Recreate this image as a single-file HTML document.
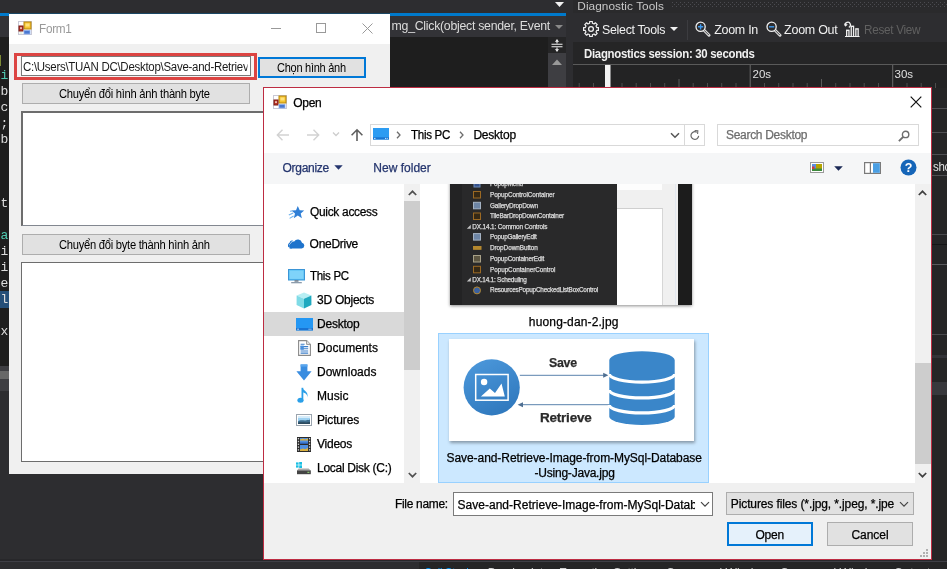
<!DOCTYPE html>
<html lang="vi"><head><meta charset="utf-8"><title>Form1 - Open</title>
<style>
html,body{margin:0;padding:0}
body{width:947px;height:569px;overflow:hidden;position:relative;background:#2d2d30;font-family:"Liberation Sans",sans-serif;font-size:12px}
div,span,svg{position:absolute;box-sizing:border-box}
.t{white-space:nowrap;transform-origin:0 50%;line-height:16px;height:16px}
.layer{left:0;top:0;width:947px;height:569px;will-change:transform}
#dlg .t{-webkit-text-stroke:0.25px currentColor}

</style></head>
<body>
<!-- ================= Visual Studio background ================= -->
<div class="layer" id="vs">
  <div style="left:0;top:13px;width:566px;height:3px;background:#007acc"></div>
  <div style="left:0;top:16px;width:566px;height:21px;background:#333337"></div>
  <div style="left:0;top:37px;width:548px;height:329px;background:#1e1e1e"></div>
  <div style="left:548px;top:37px;width:18px;height:522px;background:#3e3e42"></div>
  <div style="left:548px;top:37px;width:18px;height:16px;background:#252526"></div>
  <!-- editor bottom h-scroll bands on far left -->
  <div style="left:0;top:366px;width:9px;height:5px;background:#3e3e42"></div>
  <div style="left:0;top:371px;width:9px;height:8px;background:#686868"></div>
  <div style="left:0;top:379px;width:9px;height:12px;background:#3e3e42"></div>
  <!-- diagnostics panel -->
  <div style="left:573px;top:0;width:374px;height:560px;background:#252526"></div>
  <div style="left:573px;top:0;width:374px;height:13px;background:#2a2a2c"></div>
  <div style="left:573px;top:13px;width:374px;height:29px;background:#2d2d30"></div>
  <div style="left:573px;top:64px;width:374px;height:24px;background:#232324;border-top:1px solid #5a5a5a"></div>
    <!-- bottom strip -->
  <div style="left:0;top:559px;width:947px;height:2px;background:#27272a"></div>
  <div style="left:0;top:561px;width:947px;height:1px;background:#3f3f46"></div>
  <div style="left:0;top:562px;width:419px;height:7px;background:#2d2d30"></div>
  <div style="left:419px;top:562px;width:528px;height:7px;background:#252526"></div>

  <!-- ruler ticks + position marker -->
  <svg style="left:0;top:0" width="947" height="90" viewBox="0 0 947 90">
      <rect x="578.7" y="83" width="1" height="5" fill="#4d4d4d"/>
      <rect x="593.0" y="83" width="1" height="5" fill="#4d4d4d"/>
      <rect x="607.2" y="65" width="1" height="23" fill="#6a6a6a"/>
      <rect x="621.5" y="83" width="1" height="5" fill="#4d4d4d"/>
      <rect x="635.7" y="83" width="1" height="5" fill="#4d4d4d"/>
      <rect x="650.0" y="83" width="1" height="5" fill="#4d4d4d"/>
      <rect x="664.2" y="83" width="1" height="5" fill="#4d4d4d"/>
      <rect x="678.5" y="79" width="1" height="9" fill="#5a5a5a"/>
      <rect x="692.7" y="83" width="1" height="5" fill="#4d4d4d"/>
      <rect x="707.0" y="83" width="1" height="5" fill="#4d4d4d"/>
      <rect x="721.2" y="83" width="1" height="5" fill="#4d4d4d"/>
      <rect x="735.5" y="83" width="1" height="5" fill="#4d4d4d"/>
      <rect x="749.7" y="65" width="1" height="23" fill="#6a6a6a"/>
      <rect x="764.0" y="83" width="1" height="5" fill="#4d4d4d"/>
      <rect x="778.2" y="83" width="1" height="5" fill="#4d4d4d"/>
      <rect x="792.5" y="83" width="1" height="5" fill="#4d4d4d"/>
      <rect x="806.7" y="83" width="1" height="5" fill="#4d4d4d"/>
      <rect x="821.0" y="79" width="1" height="9" fill="#5a5a5a"/>
      <rect x="835.2" y="83" width="1" height="5" fill="#4d4d4d"/>
      <rect x="849.5" y="83" width="1" height="5" fill="#4d4d4d"/>
      <rect x="863.7" y="83" width="1" height="5" fill="#4d4d4d"/>
      <rect x="878.0" y="83" width="1" height="5" fill="#4d4d4d"/>
      <rect x="892.2" y="65" width="1" height="23" fill="#6a6a6a"/>
      <rect x="906.5" y="83" width="1" height="5" fill="#4d4d4d"/>
      <rect x="920.7" y="83" width="1" height="5" fill="#4d4d4d"/>
      <rect x="935.0" y="83" width="1" height="5" fill="#4d4d4d"/>
      <rect x="605" y="65" width="5.5" height="23" fill="#f2f2f2"/>
  </svg>
  <!-- title grip hatch -->
  <svg style="left:672px;top:2px" width="275" height="6" viewBox="0 0 275 6">
    <defs><pattern id="hp" width="4" height="4" patternUnits="userSpaceOnUse"><rect x="0" y="0" width="1" height="1" fill="#4b4b50"/><rect x="2" y="2" width="1" height="1" fill="#4b4b50"/></pattern></defs>
    <rect x="0" y="0" width="275" height="6" fill="url(#hp)"/>
  </svg>
  <!-- nav bar dropdown arrows -->
  <svg style="left:555px;top:2px" width="9" height="5" viewBox="0 0 9 5"><path d="M0 0 H9 L4.5 5 Z" fill="#f1f1f1"/></svg>
  <svg style="left:555px;top:25px" width="8" height="4" viewBox="0 0 8 4"><path d="M0 0 H8 L4 4 Z" fill="#8a8a8a"/></svg>
  <!-- splitter glyph + scroll up arrow -->
  <svg style="left:551px;top:39px" width="12" height="13" viewBox="0 0 12 13"><path d="M0.5 5.2 H11.5 M0.5 7.8 H11.5" stroke="#f1f1f1" stroke-width="1.1"/><path d="M6 0.6 V4.6 M6 8.4 V12.4" stroke="#f1f1f1" stroke-width="1.1"/><path d="M3.8 2.8 L6 0.4 L8.2 2.8 Z M3.8 10.2 L6 12.6 L8.2 10.2 Z" fill="#f1f1f1"/></svg>
  <svg style="left:552px;top:59px" width="10" height="6" viewBox="0 0 10 6"><path d="M0 6 L5 0.5 L10 6 Z" fill="#999"/></svg>
  <!-- gear -->
  <svg style="left:583px;top:21px" width="16" height="16" viewBox="0 0 16 16"><path d="M6.69 0.51 L9.31 0.51 L9.38 2.26 L11.08 2.97 L12.37 1.78 L14.22 3.63 L13.03 4.92 L13.74 6.62 L15.49 6.69 L15.49 9.31 L13.74 9.38 L13.03 11.08 L14.22 12.37 L12.37 14.22 L11.08 13.03 L9.38 13.74 L9.31 15.49 L6.69 15.49 L6.62 13.74 L4.92 13.03 L3.63 14.22 L1.78 12.37 L2.97 11.08 L2.26 9.38 L0.51 9.31 L0.51 6.69 L2.26 6.62 L2.97 4.92 L1.78 3.63 L3.63 1.78 L4.92 2.97 L6.62 2.26 Z" fill="none" stroke="#f1f1f1" stroke-width="1.2" stroke-linejoin="round"/><circle cx="8" cy="8" r="2.4" fill="none" stroke="#f1f1f1" stroke-width="1.3"/></svg>
  <svg style="left:670px;top:27px" width="8" height="4" viewBox="0 0 8 4"><path d="M0 0 H8 L4 4 Z" fill="#f1f1f1"/></svg>
  <div style="left:687px;top:20px;width:1px;height:20px;background:#3c3c40"></div>
  <!-- zoom in -->
  <svg style="left:695px;top:21px" width="16" height="16" viewBox="0 0 16 16"><path d="M8.6 8.8 L14 14.2" stroke="#d8d8d8" stroke-width="3" stroke-linecap="round"/><path d="M8.6 8.8 L13.8 14" stroke="#3a3a3c" stroke-width="0.9"/><circle cx="5.6" cy="5.8" r="4.6" fill="#2d2d30" stroke="#f1f1f1" stroke-width="1.3"/><path d="M3 5.8 H8.2 M5.6 3.2 V8.4" stroke="#3f9bf0" stroke-width="1.4"/></svg>
  <!-- zoom out -->
  <svg style="left:766px;top:21px" width="16" height="16" viewBox="0 0 16 16"><path d="M8.6 8.8 L14 14.2" stroke="#d8d8d8" stroke-width="3" stroke-linecap="round"/><path d="M8.6 8.8 L13.8 14" stroke="#3a3a3c" stroke-width="0.9"/><circle cx="5.6" cy="5.8" r="4.6" fill="#2d2d30" stroke="#f1f1f1" stroke-width="1.3"/><path d="M3 5.8 H8.2" stroke="#3f9bf0" stroke-width="1.4"/></svg>
  <!-- reset view -->
  <svg style="left:844px;top:21px" width="16" height="16" viewBox="0 0 16 16"><g fill="#efefef"><rect x="2" y="8.6" width="3.6" height="6.6"/><rect x="6.6" y="4.6" width="3.6" height="10.6"/><rect x="11.2" y="7.2" width="3.6" height="8"/></g><g fill="#2d2d30"><rect x="3.3" y="10" width="1" height="5.2"/><rect x="7.9" y="6" width="1" height="9.2"/><rect x="12.5" y="8.6" width="1" height="6.6"/></g><path d="M1 15.5 H15.6" stroke="#efefef" stroke-width="1"/><path d="M1.4 4.8 A2.6 2.6 0 1 1 4.8 6.3" fill="none" stroke="#efefef" stroke-width="1.3"/><path d="M0 2.6 L1.4 5.8 L3.8 3.6 Z" fill="#efefef"/></svg>
  <!-- right strip lines (visible beside dialog) -->
  <div style="left:932px;top:88px;width:15px;height:472px;background:#252526"></div>
  <div style="left:932px;top:108px;width:15px;height:1px;background:#4f4f52"></div>
  <div style="left:932px;top:132px;width:15px;height:1px;background:#4f4f52"></div>
  <div style="left:932px;top:154px;width:15px;height:1px;background:#4f4f52"></div>
  <div style="left:932px;top:175px;width:15px;height:1px;background:#4f4f52"></div>
  <div style="left:932px;top:234px;width:15px;height:1px;background:#4a4a4d"></div>
  <div style="left:932px;top:244px;width:15px;height:1px;background:#151516"></div>
  <div style="left:932px;top:264px;width:15px;height:1px;background:#5a5a5d"></div>
  <div style="left:932px;top:334px;width:15px;height:1px;background:#4a4a4d"></div>
  <div style="left:932px;top:355px;width:15px;height:3px;background:#333337"></div>
  <div style="left:932px;top:382px;width:15px;height:13px;background:#38383c"></div>
  <!-- highlighted code char bg -->
  <div style="left:0;top:291px;width:9px;height:17px;background:#264f78"></div>
  <div style="left:0;top:55px;width:1px;height:11px;background:#7d8a35"></div>
  <span class="t" style="left:391.6px;top:17.6px;font-size:12.3px;color:#dcdcdc;letter-spacing:-0.265px;">mg_Click(object sender, Event</span>
<span class="t" style="left:577.3px;top:-2.2px;font-size:11.8px;color:#c8c8c8;letter-spacing:0.063px;">Diagnostic Tools</span>
<span class="t" style="left:602.3px;top:21.5px;font-size:12.5px;color:#f1f1f1;letter-spacing:-0.300px;transform:scaleX(0.9926);">Select Tools</span>
<span class="t" style="left:714.2px;top:21.5px;font-size:12.5px;color:#f1f1f1;letter-spacing:-0.294px;">Zoom In</span>
<span class="t" style="left:784.1px;top:21.5px;font-size:12.5px;color:#f1f1f1;letter-spacing:-0.272px;">Zoom Out</span>
<span class="t" style="left:863.9px;top:21.5px;font-size:12.5px;color:#606060;letter-spacing:-0.300px;transform:scaleX(0.9383);">Reset View</span>
<span class="t" style="left:583.7px;top:45.6px;font-size:12px;color:#f1f1f1;font-weight:bold;letter-spacing:-0.300px;transform:scaleX(0.9507);">Diagnostics session: 30 seconds</span>
<span class="t" style="left:752.5px;top:65.8px;font-size:11.5px;color:#e0e0e0;letter-spacing:-0.016px;">20s</span>
<span class="t" style="left:894.5px;top:65.8px;font-size:11.5px;color:#e0e0e0;letter-spacing:-0.016px;">30s</span>
<span class="t" style="left:932.8px;top:158.5px;font-size:12px;color:#e0e0e0;letter-spacing:-0.300px;transform:scaleX(0.9589);">sho</span>
<span class="t" style="left:424.3px;top:564.5px;font-size:12px;color:#0097fb;letter-spacing:-0.300px;transform:scaleX(0.9328);">Call Stack</span>
<span class="t" style="left:487.7px;top:564.5px;font-size:12px;color:#d0d0d0;letter-spacing:-0.189px;">Breakpoints</span>
<span class="t" style="left:559px;top:564.5px;font-size:12px;color:#d0d0d0;letter-spacing:-0.189px;">Exception Settings</span>
<span class="t" style="left:666px;top:564.5px;font-size:12px;color:#d0d0d0;letter-spacing:0.116px;">Command Window</span>
<span class="t" style="left:780px;top:564.5px;font-size:12px;color:#d0d0d0;letter-spacing:0.116px;">Command Window</span>
<span class="t" style="left:894px;top:564.5px;font-size:12px;color:#d0d0d0;letter-spacing:0.078px;">Output</span>
<span class="t" style="left:0.5000000000000009px;top:67.5px;font-size:13px;color:#4ec9b0;font-family:'Liberation Mono', monospace;">i</span>
<span class="t" style="left:0.5000000000000009px;top:83.5px;font-size:13px;color:#dcdcdc;font-family:'Liberation Mono', monospace;">b</span>
<span class="t" style="left:-7.299999999999999px;top:99.5px;font-size:13px;color:#dcdcdc;font-family:'Liberation Mono', monospace;">.c</span>
<span class="t" style="left:0.5000000000000009px;top:115.5px;font-size:13px;color:#dcdcdc;font-family:'Liberation Mono', monospace;">;</span>
<span class="t" style="left:0.5000000000000009px;top:131.5px;font-size:13px;color:#dcdcdc;font-family:'Liberation Mono', monospace;">b</span>
<span class="t" style="left:0.5000000000000009px;top:195.5px;font-size:13px;color:#dcdcdc;font-family:'Liberation Mono', monospace;">t</span>
<span class="t" style="left:0.5000000000000009px;top:227.5px;font-size:13px;color:#4ec9b0;font-family:'Liberation Mono', monospace;">a</span>
<span class="t" style="left:0.5000000000000009px;top:243.5px;font-size:13px;color:#dcdcdc;font-family:'Liberation Mono', monospace;">i</span>
<span class="t" style="left:0.5000000000000009px;top:259.5px;font-size:13px;color:#dcdcdc;font-family:'Liberation Mono', monospace;">i</span>
<span class="t" style="left:-7.299999999999999px;top:275.5px;font-size:13px;color:#dcdcdc;font-family:'Liberation Mono', monospace;">.e</span>
<span class="t" style="left:0.5000000000000009px;top:291.5px;font-size:13px;color:#dcdcdc;font-family:'Liberation Mono', monospace;">l</span>
<span class="t" style="left:0.5000000000000009px;top:323.5px;font-size:13px;color:#dcdcdc;font-family:'Liberation Mono', monospace;">x</span>
</div>

<!-- ================= Form1 window ================= -->
<div class="layer" id="form1">
  <div style="left:9px;top:13px;width:381px;height:1px;background:#1b4764"></div>
  <div style="left:9px;top:14px;width:381px;height:460px;background:#f0f0f0"></div>
  <div style="left:9px;top:14px;width:381px;height:30px;background:#fff"></div>
  <!-- form icon -->
  <svg style="left:18px;top:21px" width="14" height="14" viewBox="0 0 14 14">
    <rect x="0.5" y="0.5" width="13" height="13" fill="#fff" stroke="#c9c9d6"/>
    <rect x="1" y="1" width="5" height="4" fill="#fdfdff"/>
    <rect x="6" y="1" width="7" height="7" fill="#f4c430" stroke="#b8860b" stroke-width="1"/>
    <rect x="7.5" y="2.5" width="4" height="3" fill="#ffe27a"/>
    <rect x="1" y="5" width="4" height="5" fill="#c0392b" stroke="#7b1a12" stroke-width="1"/>
    <rect x="2.3" y="6.3" width="1.4" height="1.6" fill="#fff"/>
    <rect x="6" y="9.5" width="6" height="3.5" fill="#4a78d0" stroke="#8fb0ea" stroke-width="0.8"/>
    <rect x="1.5" y="11" width="3" height="2" fill="#e8f0e0"/>
  </svg>
  <!-- caption buttons (inactive grey) -->
  <div style="left:271px;top:28px;width:10px;height:1px;background:#999"></div>
  <div style="left:316px;top:23px;width:10px;height:10px;border:1px solid #999"></div>
  <svg style="left:362px;top:23px" width="11" height="11" viewBox="0 0 11 11"><path d="M0.5 0.5 L10.5 10.5 M10.5 0.5 L0.5 10.5" stroke="#999" stroke-width="1" fill="none"/></svg>
  <!-- red highlight + textbox -->
  <div style="left:14px;top:53px;width:243px;height:27px;border:3px solid #dc4442;background:#f6f2f2"></div>
  <div style="left:21px;top:56px;width:230px;height:20px;background:#fff;border:1px solid #7a7a7a;overflow:hidden" id="tb1"></div>
  <!-- Chon hinh anh (focused) -->
  <div style="left:258px;top:57px;width:108px;height:21px;background:#e1e1e1;border:2px solid #0078d7"></div>
  <!-- button 1 -->
  <div style="left:22px;top:83px;width:228px;height:21px;background:#e1e1e1;border:1px solid #adadad"></div>
  <!-- listbox 1 -->
  <div style="left:21px;top:111px;width:250px;height:115px;background:#fff;border:1px solid #828790;border-top:2px solid #6d6d6d;border-left:2px solid #6d6d6d"></div>
  <!-- button 2 -->
  <div style="left:22px;top:234px;width:228px;height:21px;background:#e1e1e1;border:1px solid #adadad"></div>
  <!-- listbox 2 -->
  <div style="left:21px;top:262px;width:250px;height:200px;background:#fff;border:1px solid #6d6d6d"></div>
  <span class="t" style="left:38.7px;top:20.5px;font-size:12px;color:#999;letter-spacing:-0.300px;transform:scaleX(0.9797);">Form1</span>
<span class="t" style="left:23.2px;top:58.5px;font-size:12.5px;color:#1a1a1a;letter-spacing:-0.300px;transform:scaleX(0.9184);clip-path:inset(0 1px 0 0);">C:\Users\TUAN DC\Desktop\Save-and-Retriev</span>
<span class="t" style="left:276.5px;top:59.5px;font-size:12.5px;color:#000;letter-spacing:-0.300px;transform:scaleX(0.8807);">Chọn hình ảnh</span>
<span class="t" style="left:59.3px;top:85.5px;font-size:12.5px;color:#000;letter-spacing:-0.300px;transform:scaleX(0.8958);">Chuyển đổi hình ảnh thành byte</span>
<span class="t" style="left:59.3px;top:236.5px;font-size:12.5px;color:#000;letter-spacing:-0.300px;transform:scaleX(0.8958);">Chuyển đổi byte thành hình ảnh</span>
</div>

<!-- ================= Open file dialog ================= -->
<div class="layer" id="dlg">
  <div style="left:263px;top:87px;width:669px;height:473px;background:#fff;border:1px solid #bd2c42"></div>
  <!-- toolbar band -->
  <div style="left:264px;top:153px;width:667px;height:31px;background:#f5f6f7"></div>
  <!-- bottom band -->
  <div style="left:264px;top:483px;width:667px;height:76px;background:#f0f0f0"></div>
  <!-- address box -->
  <div style="left:370px;top:124px;width:335px;height:22px;background:#fff;border:1px solid #d9d9d9"></div>
  <div style="left:684px;top:125px;width:1px;height:20px;background:#d9d9d9"></div>
  <!-- search box -->
  <div style="left:717px;top:124px;width:202px;height:22px;background:#fff;border:1px solid #d9d9d9"></div>
  <!-- nav pane selection -->
  <div style="left:264px;top:312px;width:140px;height:24px;background:#d9d9d9"></div>
  <!-- nav scrollbar -->
  <div style="left:404px;top:184px;width:16px;height:299px;background:#f0f0f0"></div>
  <div style="left:404px;top:201px;width:16px;height:169px;background:#cdcdcd"></div>
  <!-- file list scrollbar -->
  <div style="left:915px;top:184px;width:16px;height:299px;background:#f0f0f0"></div>
  <div style="left:915px;top:363px;width:16px;height:101px;background:#cdcdcd"></div>
  <!-- file list (clipped) -->
  <div class="layer" id="flist" style="clip-path:inset(184px 32px 86px 421px)">
    <!-- thumb 1: huong-dan-2.jpg -->
    <div style="left:450px;top:150px;width:242px;height:155px;background:#29292a;box-shadow:0 1px 3px rgba(0,0,0,.45)"></div>
    <div style="left:450px;top:150px;width:12px;height:155px;background:#232324"></div>
    <div style="left:617px;top:150px;width:61px;height:155px;background:#f0f0f0"></div>
    <div style="left:617px;top:150px;width:45px;height:40px;background:#fdfdfd"></div>
    <div style="left:617px;top:208px;width:46px;height:97px;background:#fff;border-top:1px solid #cfcfcf;border-right:1px solid #d6d6d6"></div>
    <div style="left:675px;top:150px;width:1px;height:155px;background:#e3e8f0"></div>
    <div style="left:678px;top:150px;width:14px;height:155px;background:#1c1c1c"></div>
    <!-- selected tile -->
    <div style="left:438px;top:333px;width:271px;height:150px;background:#cce8ff;border:1px solid #99d1ff"></div>
    <div style="left:449px;top:339px;width:245px;height:102px;background:#fff;box-shadow:1px 2px 3px rgba(0,0,0,.35)"></div>

    <!-- thumb 2 artwork -->
    <svg style="left:449px;top:339px" width="245" height="102" viewBox="449 339 245 102">
      <defs><linearGradient id="cg" x1="0.2" y1="0" x2="0.7" y2="1"><stop offset="0" stop-color="#4b97da"/><stop offset="1" stop-color="#2f78bd"/></linearGradient></defs>
      <circle cx="491.7" cy="387.4" r="28.1" fill="url(#cg)"/>
      <rect x="475.7" y="374.5" width="32.4" height="25.7" fill="none" stroke="#fff" stroke-width="1.5"/>
      <circle cx="484.1" cy="382" r="3.2" fill="#fff"/>
      <path d="M480.9 396.6 L489.8 388.6 L495 393.1 L501.5 383.5 L504.8 396.6 Z" fill="#fff"/>
      <path d="M519.8 375.3 H606" stroke="#5b83ad" stroke-width="1" fill="none"/>
      <path d="M603.2 372.8 L608.4 375.3 L603.2 377.8 Z" fill="#4f6f92"/>
      <path d="M521.5 404.7 H609.5" stroke="#5b83ad" stroke-width="1" fill="none"/>
      <path d="M523 402.2 L517.6 404.7 L523 407.2 Z" fill="#4f6f92"/>
      <path d="M609.3 360 A32.7 8.7 0 0 1 674.7 360 V416.7 A32.7 8.2 0 0 1 609.3 416.7 Z" fill="#3a86c9"/>
      <path d="M609.3 374.1 A32.7 8 0 0 0 674.7 374.1" stroke="#fff" stroke-width="3.3" fill="none"/>
      <path d="M609.3 389.9 A32.7 8 0 0 0 674.7 389.9" stroke="#fff" stroke-width="3.3" fill="none"/>
      <path d="M609.3 404.9 A32.7 8 0 0 0 674.7 404.9" stroke="#fff" stroke-width="3.3" fill="none"/>
    </svg>
    <!-- thumb 1 tiny icons -->
    <svg style="left:464px;top:184px;opacity:.8" width="20" height="115" viewBox="464 184 20 115">
      <g fill="none" stroke-width="1">
        <rect x="474" y="181" width="6" height="6" stroke="#7fa6e0" fill="#3b5ea8"/>
        <rect x="473.5" y="191.5" width="7" height="6.5" stroke="#b87a22" fill="#3a2a10"/>
        <rect x="473.5" y="202.3" width="7" height="6.5" stroke="#c4d6ea" fill="#7f9cc4"/>
        <rect x="473.5" y="213" width="7" height="6.5" stroke="#b87a22" fill="#3a2a10"/>
        <rect x="473.5" y="233.6" width="7" height="6.5" stroke="#c4d6ea" fill="#7f9cc4"/>
        <rect x="473.5" y="246.5" width="7.5" height="2.8" stroke="#d8a030" fill="#d8a030"/>
        <rect x="473.5" y="255.5" width="7" height="6.5" stroke="#c8c0a0" fill="#6a6248"/>
        <rect x="473.5" y="266.3" width="7" height="6.5" stroke="#b87a22" fill="#3a2a10"/>
        <circle cx="477" cy="290.4" r="3.5" stroke="#d8a030" fill="#3f6fc0"/>
      </g>
      <path d="M470.8 224.8 V228.8 H466.8 Z M470.8 277.6 V281.6 H466.8 Z" fill="#e8e8e8"/>
    </svg>
    <span class="t" style="left:528.8px;top:314.0px;font-size:12px;color:#000;letter-spacing:0.160px;">huong-dan-2.jpg</span>
<span class="t" style="left:446.5px;top:450.0px;font-size:12px;color:#000;letter-spacing:-0.065px;">Save-and-Retrieve-Image-from-MySql-Database</span>
<span class="t" style="left:534.5px;top:465.0px;font-size:12px;color:#000;letter-spacing:-0.218px;">-Using-Java.jpg</span>
<span class="t" style="left:548.8px;top:354.5px;font-size:13.5px;color:#2b2b2b;font-weight:bold;letter-spacing:-0.300px;transform:scaleX(0.9165);">Save</span>
<span class="t" style="left:540px;top:409.5px;font-size:13.5px;color:#2b2b2b;font-weight:bold;letter-spacing:-0.225px;">Retrieve</span>
<span class="t" style="left:490px;top:176.3px;font-size:6.4px;color:#dadada;letter-spacing:-0.163px;">PopupMenu</span>
<span class="t" style="left:490px;top:186.7px;font-size:6.4px;color:#dadada;letter-spacing:-0.105px;">PopupControlContainer</span>
<span class="t" style="left:490px;top:197.5px;font-size:6.4px;color:#dadada;letter-spacing:-0.176px;">GalleryDropDown</span>
<span class="t" style="left:490px;top:208.2px;font-size:6.4px;color:#dadada;letter-spacing:-0.159px;">TileBarDropDownContainer</span>
<span class="t" style="left:472.3px;top:219.0px;font-size:6.4px;color:#dadada;letter-spacing:-0.131px;">DX.14.1: Common Controls</span>
<span class="t" style="left:490px;top:228.8px;font-size:6.4px;color:#dadada;letter-spacing:-0.196px;">PopupGalleryEdit</span>
<span class="t" style="left:490px;top:239.9px;font-size:6.4px;color:#dadada;letter-spacing:-0.062px;">DropDownButton</span>
<span class="t" style="left:490px;top:250.7px;font-size:6.4px;color:#dadada;letter-spacing:-0.167px;">PopupContainerEdit</span>
<span class="t" style="left:490px;top:261.5px;font-size:6.4px;color:#dadada;letter-spacing:-0.071px;">PopupContainerControl</span>
<span class="t" style="left:472.3px;top:271.9px;font-size:6.4px;color:#dadada;letter-spacing:-0.203px;">DX.14.1: Scheduling</span>
<span class="t" style="left:490px;top:282.4px;font-size:6.4px;color:#dadada;letter-spacing:-0.223px;">ResourcesPopupCheckedListBoxControl</span>
  </div>
  <!-- file name combo -->
  <div style="left:453px;top:492px;width:260px;height:24px;background:#fff;border:1px solid #7a7a7a"></div>
  <!-- filter combo -->
  <div style="left:726px;top:492px;width:188px;height:23px;background:#e1e1e1;border:1px solid #adadad"></div>
  <!-- buttons -->
  <div style="left:727px;top:522px;width:86px;height:24px;background:#e5f1fb;border:2px solid #0078d7"></div>
  <div style="left:827px;top:522px;width:86px;height:24px;background:#e1e1e1;border:1px solid #adadad"></div>

  <!-- dialog title icon -->
  <svg style="left:273px;top:95px" width="14" height="14" viewBox="0 0 14 14">
    <rect x="0.5" y="0.5" width="13" height="13" fill="#fff" stroke="#c9c9d6"/>
    <rect x="6" y="1" width="7" height="7" fill="#f4c430" stroke="#b8860b" stroke-width="1"/>
    <rect x="7.5" y="2.5" width="4" height="3" fill="#ffe27a"/>
    <rect x="1" y="5" width="4" height="5" fill="#c0392b" stroke="#7b1a12" stroke-width="1"/>
    <rect x="2.3" y="6.3" width="1.4" height="1.6" fill="#fff"/>
    <rect x="6" y="9.5" width="6" height="3.5" fill="#4a78d0" stroke="#8fb0ea" stroke-width="0.8"/>
  </svg>
  <!-- dialog close X -->
  <svg style="left:910px;top:96px" width="12" height="12" viewBox="0 0 12 12"><path d="M0.7 0.7 L11.3 11.3 M11.3 0.7 L0.7 11.3" stroke="#111" stroke-width="1.2" fill="none"/></svg>
  <!-- nav arrows -->
  <svg style="left:276px;top:128px" width="14" height="14" viewBox="0 0 14 14"><path d="M13 7 H1.5 M6.5 1.8 L1.3 7 L6.5 12.2" stroke="#d2d2d2" stroke-width="1.4" fill="none"/></svg>
  <svg style="left:306px;top:128px" width="14" height="14" viewBox="0 0 14 14"><path d="M1 7 H12.5 M7.5 1.8 L12.7 7 L7.5 12.2" stroke="#d2d2d2" stroke-width="1.4" fill="none"/></svg>
  <svg style="left:332px;top:131px" width="8" height="6" viewBox="0 0 8 6"><path d="M1 1.5 L4 4.5 L7 1.5" stroke="#cdcdcd" stroke-width="1.3" fill="none"/></svg>
  <svg style="left:350px;top:128px" width="14" height="14" viewBox="0 0 14 14"><path d="M7 13 V2 M1.6 7.2 L7 1.8 L12.4 7.2" stroke="#5e5e5e" stroke-width="1.6" fill="none"/></svg>
  <!-- address PC icon -->
  <svg style="left:373px;top:128px" width="16" height="12" viewBox="0 0 16 12">
    <rect x="0" y="0" width="16" height="11.5" fill="#2c9cf2"/>
    <rect x="0" y="9.3" width="16" height="2.2" fill="#1976d2"/>
    <rect x="1.2" y="9.9" width="1.2" height="1" fill="#fff"/><rect x="12" y="9.9" width="1" height="1" fill="#d6ecff"/><rect x="13.7" y="9.9" width="1" height="1" fill="#d6ecff"/>
  </svg>
  <svg style="left:396px;top:131px" width="5" height="8" viewBox="0 0 5 8"><path d="M1 0.8 L4 4 L1 7.2" stroke="#6d6d6d" stroke-width="1.3" fill="none"/></svg>
  <svg style="left:459px;top:131px" width="5" height="8" viewBox="0 0 5 8"><path d="M1 0.8 L4 4 L1 7.2" stroke="#6d6d6d" stroke-width="1.3" fill="none"/></svg>
  <svg style="left:670px;top:132px" width="10" height="7" viewBox="0 0 10 7"><path d="M1 1.2 L5 5.2 L9 1.2" stroke="#555" stroke-width="1.5" fill="none"/></svg>
  <!-- refresh -->
  <svg style="left:690px;top:130px" width="10" height="11" viewBox="0 0 12 13"><path d="M8.2 2.6 A4.6 4.6 0 1 0 10.4 7" stroke="#666" stroke-width="1.4" fill="none"/><path d="M5.6 0.6 L9.4 0.9 L9.1 4.7" stroke="#666" stroke-width="1.3" fill="none"/></svg>
  <!-- search magnifier -->
  <svg style="left:898px;top:130px" width="12" height="12" viewBox="0 0 12 12"><circle cx="7.6" cy="4.4" r="3.2" stroke="#6d6d6d" stroke-width="1.4" fill="none"/><path d="M5.2 6.8 L0.9 11.1" stroke="#6d6d6d" stroke-width="1.9" fill="none"/></svg>

  <!-- toolbar: organize arrow, view icon, dropdown, preview pane, help -->
  <svg style="left:334px;top:165px" width="9" height="5" viewBox="0 0 9 5"><path d="M0.3 0.3 H8.7 L4.5 4.7 Z" fill="#24356e"/></svg>
  <svg style="left:810px;top:162px" width="14" height="11" viewBox="0 0 14 11">
    <rect x="0.5" y="0.5" width="13" height="10" fill="#fff" stroke="#9a9a9a"/>
    <rect x="2" y="2" width="10" height="7" fill="#5b8fe0"/>
    <rect x="6" y="2" width="6" height="5" fill="#b5a400"/>
    <rect x="2" y="6.5" width="10" height="2.5" fill="#3c8a3c"/>
    <rect x="2" y="4.5" width="2.5" height="2.5" fill="#d23a3a"/>
  </svg>
  <svg style="left:834px;top:166px" width="9" height="5" viewBox="0 0 9 5"><path d="M0.2 0.2 H8.8 L4.5 4.8 Z" fill="#1a2855"/></svg>
  <svg style="left:864px;top:162px" width="17" height="12" viewBox="0 0 17 12">
    <rect x="0.6" y="0.6" width="15.8" height="10.8" fill="#fff" stroke="#7a7a7a" stroke-width="1.2"/>
    <rect x="9" y="1.2" width="6.8" height="9.6" fill="#4a9fe3"/>
    <rect x="5.8" y="1" width="1.2" height="10" fill="#7a7a7a"/>
  </svg>
  <svg style="left:900px;top:159px" width="17" height="17" viewBox="0 0 17 17"><circle cx="8.5" cy="8.5" r="8" fill="#1565b8"/><text x="8.5" y="13" text-anchor="middle" font-family="Liberation Sans, sans-serif" font-weight="bold" font-size="12.5" fill="#fff">?</text></svg>
  <!-- scrollbar arrows -->
  <svg style="left:408px;top:190px" width="9" height="6" viewBox="0 0 9 6"><path d="M0.8 5 L4.5 1.3 L8.2 5" stroke="#505050" stroke-width="1.7" fill="none"/></svg>
  <svg style="left:408px;top:472px" width="9" height="6" viewBox="0 0 9 6"><path d="M0.8 1 L4.5 4.7 L8.2 1" stroke="#505050" stroke-width="1.7" fill="none"/></svg>
  <svg style="left:918px;top:190px" width="9" height="6" viewBox="0 0 9 6"><path d="M0.8 5 L4.5 1.3 L8.2 5" stroke="#404040" stroke-width="1.7" fill="none"/></svg>
  <svg style="left:918px;top:472px" width="9" height="6" viewBox="0 0 9 6"><path d="M0.8 1 L4.5 4.7 L8.2 1" stroke="#404040" stroke-width="1.7" fill="none"/></svg>
  <!-- nav pane icons -->
  <!-- quick access star -->
  <svg style="left:288px;top:205px" width="17" height="15" viewBox="0 0 17 15">
    <path d="M9.8 0.9 L11.7 5.2 L16.2 5.5 L12.7 8.5 L13.9 13.2 L9.8 10.6 L5.8 13.2 L7 8.5 L3.4 5.5 L8 5.2 Z" fill="#2f7fd6"/>
    <path d="M0.8 10 L5.2 8 M1.6 13.4 L5.6 11 M2 6.2 L4 6" stroke="#6fb3ee" stroke-width="1.1" fill="none"/>
  </svg>
  <!-- onedrive cloud -->
  <svg style="left:288px;top:238px" width="17" height="11" viewBox="0 0 17 11">
    <path d="M4.2 10.6 H13.6 A3 3 0 0 0 14 4.7 A4.3 4.3 0 0 0 6.2 3.4 A3 3 0 0 0 2.4 5.6 A2.6 2.6 0 0 0 4.2 10.6 Z" fill="#1e73cc"/>
    <path d="M1.2 9.6 A2.6 2.6 0 0 1 2.4 5.6 A3 3 0 0 1 5.4 3.3" stroke="#fff" stroke-width="0.9" fill="none" opacity=".85"/>
    <path d="M0.9 8.9 A2.5 2.5 0 0 1 1.9 5.2 A3.1 3.1 0 0 1 4.6 2.8" stroke="#1e73cc" stroke-width="1.1" fill="none"/>
  </svg>
  <!-- this pc monitor -->
  <svg style="left:288px;top:269px" width="17" height="15" viewBox="0 0 17 15">
    <rect x="0.5" y="0.5" width="16" height="10.5" fill="#59c2f3" stroke="#3b95d6"/>
    <rect x="1.6" y="1.6" width="13.8" height="8.3" fill="#7fd3fa"/>
    <rect x="6.5" y="11" width="4" height="1.8" fill="#7a8a99"/>
    <rect x="3.2" y="13" width="10.6" height="1.3" fill="#8c9bab"/>
  </svg>
  <!-- 3D objects cube -->
  <svg style="left:296px;top:292px" width="16" height="17" viewBox="0 0 16 17">
    <path d="M8 0.6 L15.4 3.6 L8 6.8 L0.6 3.6 Z" fill="#b7eef3"/>
    <path d="M0.6 3.6 L8 6.8 V16.4 L0.6 13 Z" fill="#7fdbe6"/>
    <path d="M15.4 3.6 L8 6.8 V16.4 L15.4 13 Z" fill="#1fa9bf"/>
  </svg>
  <!-- desktop -->
  <svg style="left:296px;top:318px" width="17" height="13" viewBox="0 0 17 13">
    <rect x="0" y="0" width="17" height="12.4" fill="#2497f3"/>
    <rect x="0" y="10" width="17" height="2.4" fill="#1873d3"/>
    <rect x="1.4" y="10.7" width="1.3" height="1" fill="#fff"/><rect x="12.6" y="10.7" width="1" height="1" fill="#d6ecff"/><rect x="14.4" y="10.7" width="1" height="1" fill="#d6ecff"/>
  </svg>
  <!-- documents -->
  <svg style="left:298px;top:340px" width="13" height="16" viewBox="0 0 13 16">
    <path d="M0.6 0.6 H8.6 L12.4 4.4 V15.4 H0.6 Z" fill="#fff" stroke="#8a8a8a" stroke-width="1.1"/>
    <path d="M8.6 0.6 V4.4 H12.4" fill="#e8e8e8" stroke="#8a8a8a" stroke-width="0.9"/>
    <path d="M2.6 4.2 H6.6 M2.6 6.6 H10.2 M2.6 8.8 H10.2 M2.6 11 H10.2 M2.6 13.1 H10.2" stroke="#3d7fc9" stroke-width="1.1"/>
    <rect x="2.4" y="5.6" width="3.4" height="4.2" fill="#4a8fdb"/>
  </svg>
  <!-- downloads -->
  <svg style="left:296px;top:364px" width="16" height="17" viewBox="0 0 16 17">
    <path d="M4.6 0.4 H11.4 V7.2 H15.6 L8 16.4 L0.4 7.2 H4.6 Z" fill="#3a8de0"/>
    <path d="M4.6 0.4 H11.4 V2.6 H4.6 Z" fill="#5aa6ee"/>
  </svg>
  <!-- music -->
  <svg style="left:297px;top:387px" width="13" height="17" viewBox="0 0 13 17">
    <path d="M5.4 0.8 V12.4" stroke="#2a9fe8" stroke-width="1.8" fill="none"/>
    <path d="M5.4 0.8 C6.4 3.8 11.8 4.6 10.4 10.4 C10.6 7.2 7.6 6 6.2 5.6 Z" fill="#2a9fe8"/>
    <ellipse cx="3.5" cy="13.2" rx="3.1" ry="2.5" fill="#2a9fe8"/>
  </svg>
  <!-- pictures -->
  <svg style="left:296px;top:414px" width="16" height="12" viewBox="0 0 16 12">
    <rect x="0.5" y="0.5" width="15" height="11" fill="#fff" stroke="#9aa4ae"/>
    <rect x="2" y="2" width="12" height="8" fill="#9fd2f2"/>
    <path d="M2 7.4 C5 4.8 8 7.6 14 5.6 V10 H2 Z" fill="#3e6e8e"/>
    <path d="M2 8.8 C6 7.4 9 9.2 14 8 V10 H2 Z" fill="#2c4a5e"/>
    <rect x="2" y="2" width="12" height="2" fill="#d6ecfa"/>
  </svg>
  <!-- videos -->
  <svg style="left:297px;top:437px" width="14" height="15" viewBox="0 0 14 15">
    <rect x="0" y="0" width="14" height="15" fill="#2b2b2b"/>
    <rect x="3" y="1" width="8" height="6" fill="#4f8fe0"/>
    <rect x="3" y="8" width="8" height="6" fill="#4f8fe0"/>
    <path d="M3 2.6 L6 1.6 L8 2.6 L11 1.4 V3.4 H3 Z" fill="#d9b040"/>
    <path d="M3 12.4 L6 11.4 L8 12.2 L11 11 V14 H3 Z" fill="#d9b040"/>
    <path d="M3 5.6 H11 V7 H3 Z" fill="#2d5fb0"/>
    <g fill="#cfcfcf"><rect x="0.8" y="1" width="1.3" height="1.4"/><rect x="0.8" y="3.8" width="1.3" height="1.4"/><rect x="0.8" y="6.6" width="1.3" height="1.4"/><rect x="0.8" y="9.4" width="1.3" height="1.4"/><rect x="0.8" y="12.2" width="1.3" height="1.4"/>
    <rect x="11.9" y="1" width="1.3" height="1.4"/><rect x="11.9" y="3.8" width="1.3" height="1.4"/><rect x="11.9" y="6.6" width="1.3" height="1.4"/><rect x="11.9" y="9.4" width="1.3" height="1.4"/><rect x="11.9" y="12.2" width="1.3" height="1.4"/></g>
  </svg>
  <!-- local disk -->
  <svg style="left:296px;top:462px" width="16" height="13" viewBox="0 0 16 13">
    <g fill="#19bfe3"><rect x="0" y="0.4" width="2.6" height="2.3"/><rect x="3.2" y="0" width="2.8" height="2.7"/><rect x="0" y="3.3" width="2.6" height="2.3"/><rect x="3.2" y="3.3" width="2.8" height="2.7"/></g>
    <path d="M2.6 6.4 H12.6 L14.8 8.4 H1 Z" fill="#a9a9a9"/>
    <rect x="1" y="8.4" width="13.8" height="3.8" fill="#444"/>
    <rect x="11.4" y="9.8" width="2" height="1" fill="#9be37a"/>
  </svg>
  <!-- combo chevrons -->
  <svg style="left:700px;top:501px" width="10" height="7" viewBox="0 0 10 7"><path d="M1 1.2 L5 5.2 L9 1.2" stroke="#444" stroke-width="1.2" fill="none"/></svg>
  <svg style="left:899px;top:501px" width="10" height="7" viewBox="0 0 10 7"><path d="M1 1.2 L5 5.2 L9 1.2" stroke="#444" stroke-width="1.2" fill="none"/></svg>
  <!-- size grip -->
  <svg style="left:919px;top:548px" width="10" height="10" viewBox="0 0 10 10"><g fill="#b0b0b0"><rect x="7" y="1" width="2" height="2"/><rect x="4" y="4" width="2" height="2"/><rect x="7" y="4" width="2" height="2"/><rect x="1" y="7" width="2" height="2"/><rect x="4" y="7" width="2" height="2"/><rect x="7" y="7" width="2" height="2"/></g></svg>

  <span class="t" style="left:293.3px;top:94.5px;font-size:12px;color:#000;letter-spacing:-0.290px;">Open</span>
<span class="t" style="left:410.7px;top:127.0px;font-size:12px;color:#000;letter-spacing:-0.300px;transform:scaleX(0.9634);">This PC</span>
<span class="t" style="left:473.4px;top:127.0px;font-size:12px;color:#000;letter-spacing:-0.219px;">Desktop</span>
<span class="t" style="left:726px;top:127.0px;font-size:12px;color:#6d6d6d;letter-spacing:-0.300px;">Search Desktop</span>
<span class="t" style="left:282.5px;top:159.5px;font-size:12px;color:#24356e;letter-spacing:-0.275px;">Organize</span>
<span class="t" style="left:373.3px;top:159.5px;font-size:12px;color:#24356e;letter-spacing:0.014px;">New folder</span>
<span class="t" style="left:309.6px;top:204.0px;font-size:12px;color:#000;letter-spacing:-0.300px;transform:scaleX(0.9947);">Quick access</span>
<span class="t" style="left:309.6px;top:236.0px;font-size:12px;color:#000;letter-spacing:-0.286px;">OneDrive</span>
<span class="t" style="left:309.6px;top:267.5px;font-size:12px;color:#000;letter-spacing:-0.300px;transform:scaleX(0.9584);">This PC</span>
<span class="t" style="left:317px;top:291.5px;font-size:12px;color:#000;letter-spacing:-0.236px;">3D Objects</span>
<span class="t" style="left:317px;top:315.5px;font-size:12px;color:#000;letter-spacing:-0.219px;">Desktop</span>
<span class="t" style="left:317px;top:339.5px;font-size:12px;color:#000;letter-spacing:0.033px;">Documents</span>
<span class="t" style="left:317px;top:363.5px;font-size:12px;color:#000;letter-spacing:0.014px;">Downloads</span>
<span class="t" style="left:317px;top:387.5px;font-size:12px;color:#000;letter-spacing:0.031px;">Music</span>
<span class="t" style="left:317px;top:411.5px;font-size:12px;color:#000;letter-spacing:-0.170px;">Pictures</span>
<span class="t" style="left:317px;top:435.5px;font-size:12px;color:#000;letter-spacing:-0.247px;">Videos</span>
<span class="t" style="left:317px;top:459.5px;font-size:12px;color:#000;letter-spacing:-0.279px;">Local Disk (C:)</span>
<span class="t" style="left:394.6px;top:496.0px;font-size:12px;color:#000;letter-spacing:-0.300px;transform:scaleX(0.9956);">File name:</span>
<span class="t" style="left:457.5px;top:496.5px;font-size:12px;color:#000;letter-spacing:0.019px;clip-path:inset(0 2px 0 0);">Save-and-Retrieve-Image-from-MySql-Datab</span>
<span class="t" style="left:730.8px;top:496.0px;font-size:12px;color:#000;letter-spacing:-0.112px;">Pictures files (*.jpg, *.jpeg, *.jpe</span>
<span class="t" style="left:755.5px;top:526.5px;font-size:12px;color:#000;letter-spacing:-0.215px;">Open</span>
<span class="t" style="left:851.5px;top:526.5px;font-size:12px;color:#000;letter-spacing:-0.060px;">Cancel</span>
</div>

</body></html>
